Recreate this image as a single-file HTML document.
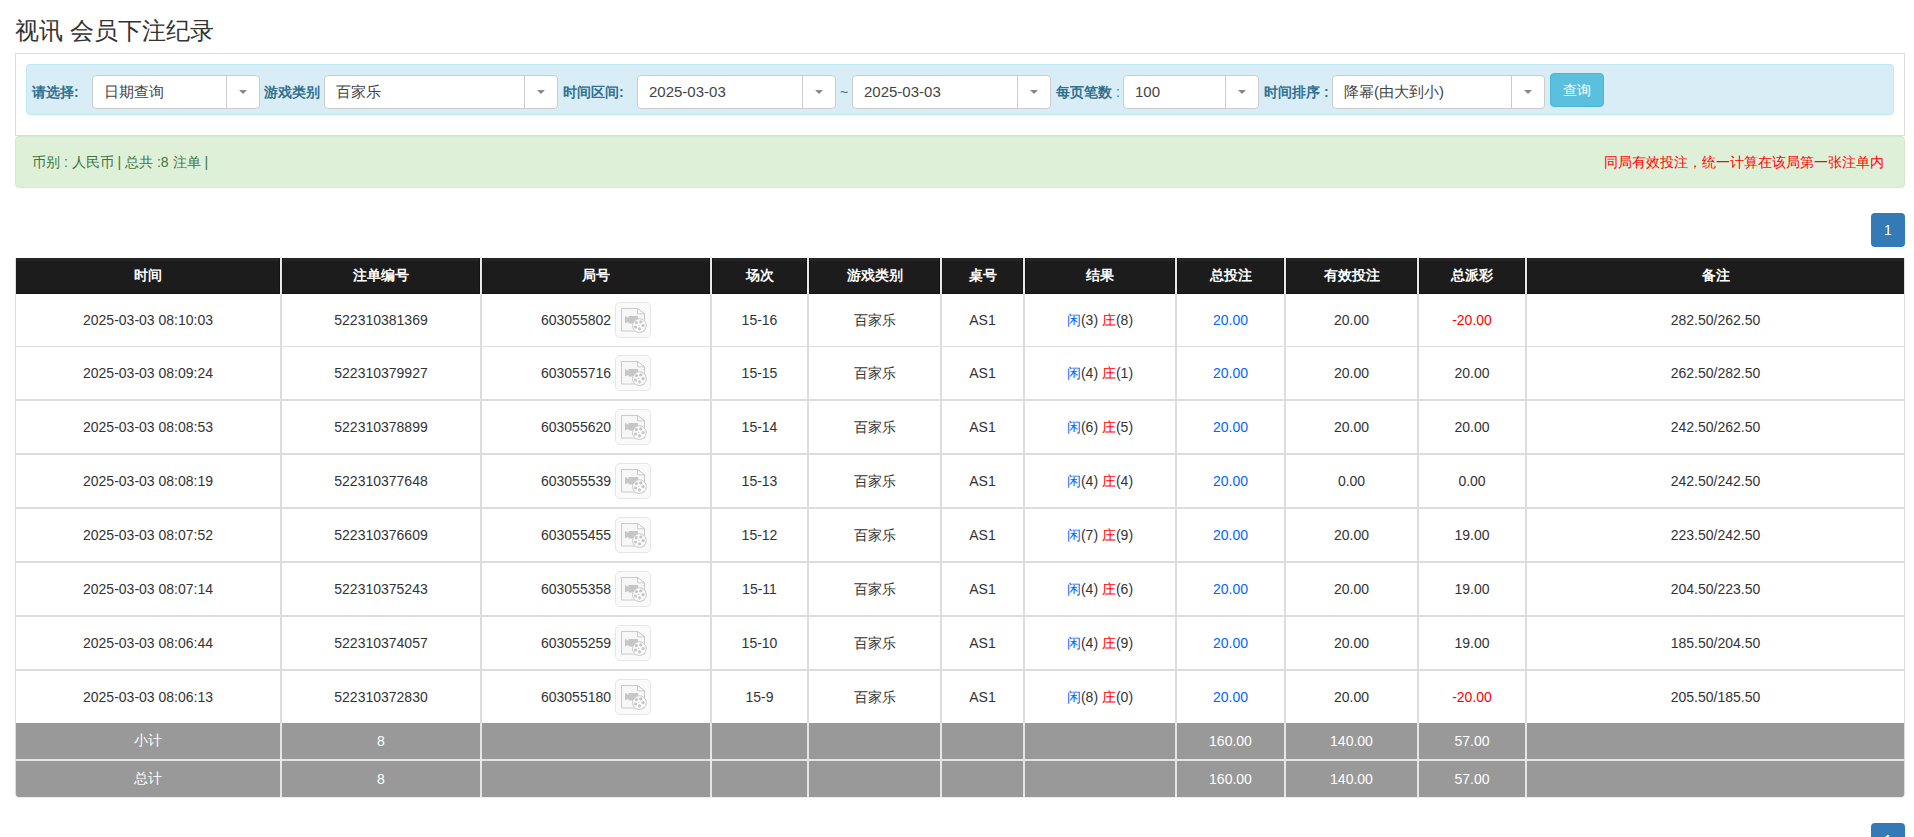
<!DOCTYPE html>
<html><head><meta charset="utf-8"><title>视讯 会员下注纪录</title>
<style>
*{box-sizing:border-box;margin:0;padding:0}
html,body{width:1914px;height:837px;overflow:hidden;background:#fff}
body{font-family:"Liberation Sans",sans-serif;font-size:14px;color:#333;position:relative}
.a{position:absolute}
.c{position:absolute;display:flex;align-items:center;justify-content:center;white-space:nowrap}
.c>span{line-height:20px}
h3{position:absolute;left:15px;top:14px;font-size:24px;font-weight:normal;line-height:34px;color:#333}
.panel{position:absolute;left:15px;top:53px;width:1890px;height:83px;border:1px solid #ddd;background:#fff}
.info{position:absolute;left:26px;top:64px;width:1868px;height:51px;background:#d9edf7;border:1px solid #bce8f1;border-radius:4px}
.lbl{position:absolute;top:75px;height:34px;line-height:34px;font-size:14px;font-weight:bold;color:#31708f;white-space:nowrap}
.sel{position:absolute;top:75px;height:34px;background:#fff;border:1px solid #ccc;border-radius:4px}
.sel .t{position:absolute;left:11px;top:0;line-height:32px;font-size:15px;color:#444;white-space:nowrap}
.sel .s{position:absolute;right:32px;top:0;width:1px;height:32px;background:#ccc}
.sel .ar{position:absolute;right:12px;top:14px;width:0;height:0;border-left:4px solid transparent;border-right:4px solid transparent;border-top:4px solid #888}
.btn{position:absolute;left:1550px;top:73px;width:54px;height:34px;background:#5bc0de;border:1px solid #46b8da;border-radius:4px;color:#fff;font-size:14px;line-height:32px;text-align:center}
.alert{position:absolute;left:15px;top:136px;width:1890px;height:52px;background:#dff0d8;border:1px solid #d6e9c6;border-radius:4px}
.pg{position:absolute;left:1871px;width:34px;height:34px;background:#337ab7;border-radius:4px;color:#fff;font-size:14px;line-height:34px;text-align:center}
.hd{position:absolute;left:16px;top:258px;width:1888px;height:36px;background:linear-gradient(#252525 0,#252525 3px,#1c1c1c 3px,#1c1c1c 35px,#121212 35px)}
.hc{position:absolute;display:flex;align-items:center;justify-content:center;color:#fff;font-weight:bold;font-size:14px;white-space:nowrap}
.vl{position:absolute;width:2px;background:#ddd}
.hl{position:absolute;left:16px;width:1888px;background:#ddd}
.gr{position:absolute;left:16px;width:1888px;height:36px;background:#999}
.gc{position:absolute;display:flex;align-items:center;justify-content:center;color:#fff;font-size:14px;white-space:nowrap}
.ib{display:inline-block;vertical-align:middle;width:36px;height:36px;border:1px solid #e6e6e6;border-radius:5px;background:#fafafa;margin-left:4px;position:relative}
.ib svg{position:absolute;left:-1px;top:-1px}
.bl{color:#0066ff}.rd{color:#ff0000}
</style></head><body>
<h3>视讯 会员下注纪录</h3>
<div class="panel"></div>
<div class="info"></div>

<div class="lbl" style="left:32px">请选择:</div>
<div class="sel" style="left:92px;width:168px"><span class="t">日期查询</span><i class="s"></i><i class="ar"></i></div>
<div class="lbl" style="left:264px">游戏类别</div>
<div class="sel" style="left:324px;width:234px"><span class="t">百家乐</span><i class="s"></i><i class="ar"></i></div>
<div class="lbl" style="left:563px">时间区间:</div>
<div class="sel" style="left:637px;width:199px"><span class="t">2025-03-03</span><i class="s"></i><i class="ar"></i></div>
<div class="lbl" style="left:840px;font-weight:normal">~</div>
<div class="sel" style="left:852px;width:199px"><span class="t">2025-03-03</span><i class="s"></i><i class="ar"></i></div>
<div class="lbl" style="left:1056px">每页笔数 <span style="font-weight:normal">:</span></div>
<div class="sel" style="left:1123px;width:136px"><span class="t">100</span><i class="s"></i><i class="ar"></i></div>
<div class="lbl" style="left:1264px">时间排序 :</div>
<div class="sel" style="left:1332px;width:213px"><span class="t">降幂(由大到小)</span><i class="s"></i><i class="ar"></i></div>
<div class="btn">查询</div>
<div class="alert"></div>
<div class="a" style="left:32px;top:152px;line-height:20px;font-size:14px;color:#3c763d;white-space:nowrap">币别 : 人民币 | 总共 :8 注单 |</div>
<div class="a" style="left:1604px;top:152px;line-height:20px;font-size:14px;color:#ff0000;white-space:nowrap">同局有效投注，统一计算在该局第一张注单内</div>
<div class="pg" style="top:213px">1</div>
<div class="a" style="left:15px;top:258px;width:1890px;height:539px;border:1px solid #ddd;border-top:0;border-radius:0 0 4px 4px;box-shadow:0 1px 1px rgba(0,0,0,.08)"></div>
<div class="hd"></div>
<div class="hc" style="left:16px;top:258px;width:264px;height:36px">时间</div>
<div class="hc" style="left:282px;top:258px;width:198px;height:36px">注单编号</div>
<div class="hc" style="left:482px;top:258px;width:228px;height:36px">局号</div>
<div class="hc" style="left:712px;top:258px;width:95px;height:36px">场次</div>
<div class="hc" style="left:809px;top:258px;width:131px;height:36px">游戏类别</div>
<div class="hc" style="left:942px;top:258px;width:81px;height:36px">桌号</div>
<div class="hc" style="left:1025px;top:258px;width:150px;height:36px">结果</div>
<div class="hc" style="left:1177px;top:258px;width:107px;height:36px">总投注</div>
<div class="hc" style="left:1286px;top:258px;width:131px;height:36px">有效投注</div>
<div class="hc" style="left:1419px;top:258px;width:106px;height:36px">总派彩</div>
<div class="hc" style="left:1527px;top:258px;width:377px;height:36px">备注</div>
<div class="a" style="left:279px;top:258px;width:4px;height:36px;background:linear-gradient(90deg,#141414 0,#141414 1px,#e9e9e9 1px,#e9e9e9 3px,#141414 3px)"></div>
<div class="vl" style="left:280px;top:257px;height:1px;background:#f0f0f0"></div>
<div class="vl" style="left:280px;top:294px;height:503px"></div>
<div class="a" style="left:479px;top:258px;width:4px;height:36px;background:linear-gradient(90deg,#141414 0,#141414 1px,#e9e9e9 1px,#e9e9e9 3px,#141414 3px)"></div>
<div class="vl" style="left:480px;top:257px;height:1px;background:#f0f0f0"></div>
<div class="vl" style="left:480px;top:294px;height:503px"></div>
<div class="a" style="left:709px;top:258px;width:4px;height:36px;background:linear-gradient(90deg,#141414 0,#141414 1px,#e9e9e9 1px,#e9e9e9 3px,#141414 3px)"></div>
<div class="vl" style="left:710px;top:257px;height:1px;background:#f0f0f0"></div>
<div class="vl" style="left:710px;top:294px;height:503px"></div>
<div class="a" style="left:806px;top:258px;width:4px;height:36px;background:linear-gradient(90deg,#141414 0,#141414 1px,#e9e9e9 1px,#e9e9e9 3px,#141414 3px)"></div>
<div class="vl" style="left:807px;top:257px;height:1px;background:#f0f0f0"></div>
<div class="vl" style="left:807px;top:294px;height:503px"></div>
<div class="a" style="left:939px;top:258px;width:4px;height:36px;background:linear-gradient(90deg,#141414 0,#141414 1px,#e9e9e9 1px,#e9e9e9 3px,#141414 3px)"></div>
<div class="vl" style="left:940px;top:257px;height:1px;background:#f0f0f0"></div>
<div class="vl" style="left:940px;top:294px;height:503px"></div>
<div class="a" style="left:1022px;top:258px;width:4px;height:36px;background:linear-gradient(90deg,#141414 0,#141414 1px,#e9e9e9 1px,#e9e9e9 3px,#141414 3px)"></div>
<div class="vl" style="left:1023px;top:257px;height:1px;background:#f0f0f0"></div>
<div class="vl" style="left:1023px;top:294px;height:503px"></div>
<div class="a" style="left:1174px;top:258px;width:4px;height:36px;background:linear-gradient(90deg,#141414 0,#141414 1px,#e9e9e9 1px,#e9e9e9 3px,#141414 3px)"></div>
<div class="vl" style="left:1175px;top:257px;height:1px;background:#f0f0f0"></div>
<div class="vl" style="left:1175px;top:294px;height:503px"></div>
<div class="a" style="left:1283px;top:258px;width:4px;height:36px;background:linear-gradient(90deg,#141414 0,#141414 1px,#e9e9e9 1px,#e9e9e9 3px,#141414 3px)"></div>
<div class="vl" style="left:1284px;top:257px;height:1px;background:#f0f0f0"></div>
<div class="vl" style="left:1284px;top:294px;height:503px"></div>
<div class="a" style="left:1416px;top:258px;width:4px;height:36px;background:linear-gradient(90deg,#141414 0,#141414 1px,#e9e9e9 1px,#e9e9e9 3px,#141414 3px)"></div>
<div class="vl" style="left:1417px;top:257px;height:1px;background:#f0f0f0"></div>
<div class="vl" style="left:1417px;top:294px;height:503px"></div>
<div class="a" style="left:1524px;top:258px;width:4px;height:36px;background:linear-gradient(90deg,#141414 0,#141414 1px,#e9e9e9 1px,#e9e9e9 3px,#141414 3px)"></div>
<div class="vl" style="left:1525px;top:257px;height:1px;background:#f0f0f0"></div>
<div class="vl" style="left:1525px;top:294px;height:503px"></div>
<div class="hl" style="top:346px;height:1px"></div>
<div class="hl" style="top:399px;height:2px"></div>
<div class="hl" style="top:453px;height:2px"></div>
<div class="hl" style="top:507px;height:2px"></div>
<div class="hl" style="top:561px;height:2px"></div>
<div class="hl" style="top:615px;height:2px"></div>
<div class="hl" style="top:669px;height:2px"></div>
<div class="c" style="left:16px;top:294px;width:264px;height:52px"><span>2025-03-03 08:10:03</span></div>
<div class="c" style="left:282px;top:294px;width:198px;height:52px"><span>522310381369</span></div>
<div class="c" style="left:482px;top:294px;width:228px;height:52px"><span><b style="display:flex;align-items:center;font-weight:normal">603055802<span class="ib"><svg width="36" height="36" viewBox="0 0 36 36"><path d="M6.5 6.5H22.5L29.5 11.8V29H6.5Z" fill="#f7f7f7" stroke="#cacaca" stroke-width="1"/><path d="M22.5 6.5V11.8H29.5Z" fill="#fff" stroke="#cacaca" stroke-width="1"/><path d="M13.5 14H23V21.5H13.5Z" fill="#c6c6c6"/><path d="M10 14L14 16V19.5L10 21.5Z" fill="#c6c6c6"/><circle cx="24.4" cy="23.6" r="6.9" fill="#fbfbfb" stroke="#cacaca" stroke-width="1"/><circle cx="21.3" cy="20.6" r="1.6" fill="#c6c6c6"/><circle cx="25.8" cy="19.8" r="1.6" fill="#c6c6c6"/><circle cx="28.1" cy="23.6" r="1.6" fill="#c6c6c6"/><circle cx="24.5" cy="26.8" r="1.6" fill="#c6c6c6"/><circle cx="20.6" cy="25" r="1.6" fill="#c6c6c6"/><circle cx="23.7" cy="23.4" r="0.6" fill="#c6c6c6"/></svg></span></b></span></div>
<div class="c" style="left:712px;top:294px;width:95px;height:52px"><span>15-16</span></div>
<div class="c" style="left:809px;top:294px;width:131px;height:52px"><span>百家乐</span></div>
<div class="c" style="left:942px;top:294px;width:81px;height:52px"><span>AS1</span></div>
<div class="c" style="left:1025px;top:294px;width:150px;height:52px"><span><span class="bl">闲</span>(3) <span class="rd">庄</span>(8)</span></div>
<div class="c" style="left:1177px;top:294px;width:107px;height:52px"><span><span class="bl">20.00</span></span></div>
<div class="c" style="left:1286px;top:294px;width:131px;height:52px"><span>20.00</span></div>
<div class="c" style="left:1419px;top:294px;width:106px;height:52px"><span><span class="rd">-20.00</span></span></div>
<div class="c" style="left:1527px;top:294px;width:377px;height:52px"><span>282.50/262.50</span></div>
<div class="c" style="left:16px;top:347px;width:264px;height:52px"><span>2025-03-03 08:09:24</span></div>
<div class="c" style="left:282px;top:347px;width:198px;height:52px"><span>522310379927</span></div>
<div class="c" style="left:482px;top:347px;width:228px;height:52px"><span><b style="display:flex;align-items:center;font-weight:normal">603055716<span class="ib"><svg width="36" height="36" viewBox="0 0 36 36"><path d="M6.5 6.5H22.5L29.5 11.8V29H6.5Z" fill="#f7f7f7" stroke="#cacaca" stroke-width="1"/><path d="M22.5 6.5V11.8H29.5Z" fill="#fff" stroke="#cacaca" stroke-width="1"/><path d="M13.5 14H23V21.5H13.5Z" fill="#c6c6c6"/><path d="M10 14L14 16V19.5L10 21.5Z" fill="#c6c6c6"/><circle cx="24.4" cy="23.6" r="6.9" fill="#fbfbfb" stroke="#cacaca" stroke-width="1"/><circle cx="21.3" cy="20.6" r="1.6" fill="#c6c6c6"/><circle cx="25.8" cy="19.8" r="1.6" fill="#c6c6c6"/><circle cx="28.1" cy="23.6" r="1.6" fill="#c6c6c6"/><circle cx="24.5" cy="26.8" r="1.6" fill="#c6c6c6"/><circle cx="20.6" cy="25" r="1.6" fill="#c6c6c6"/><circle cx="23.7" cy="23.4" r="0.6" fill="#c6c6c6"/></svg></span></b></span></div>
<div class="c" style="left:712px;top:347px;width:95px;height:52px"><span>15-15</span></div>
<div class="c" style="left:809px;top:347px;width:131px;height:52px"><span>百家乐</span></div>
<div class="c" style="left:942px;top:347px;width:81px;height:52px"><span>AS1</span></div>
<div class="c" style="left:1025px;top:347px;width:150px;height:52px"><span><span class="bl">闲</span>(4) <span class="rd">庄</span>(1)</span></div>
<div class="c" style="left:1177px;top:347px;width:107px;height:52px"><span><span class="bl">20.00</span></span></div>
<div class="c" style="left:1286px;top:347px;width:131px;height:52px"><span>20.00</span></div>
<div class="c" style="left:1419px;top:347px;width:106px;height:52px"><span>20.00</span></div>
<div class="c" style="left:1527px;top:347px;width:377px;height:52px"><span>262.50/282.50</span></div>
<div class="c" style="left:16px;top:401px;width:264px;height:52px"><span>2025-03-03 08:08:53</span></div>
<div class="c" style="left:282px;top:401px;width:198px;height:52px"><span>522310378899</span></div>
<div class="c" style="left:482px;top:401px;width:228px;height:52px"><span><b style="display:flex;align-items:center;font-weight:normal">603055620<span class="ib"><svg width="36" height="36" viewBox="0 0 36 36"><path d="M6.5 6.5H22.5L29.5 11.8V29H6.5Z" fill="#f7f7f7" stroke="#cacaca" stroke-width="1"/><path d="M22.5 6.5V11.8H29.5Z" fill="#fff" stroke="#cacaca" stroke-width="1"/><path d="M13.5 14H23V21.5H13.5Z" fill="#c6c6c6"/><path d="M10 14L14 16V19.5L10 21.5Z" fill="#c6c6c6"/><circle cx="24.4" cy="23.6" r="6.9" fill="#fbfbfb" stroke="#cacaca" stroke-width="1"/><circle cx="21.3" cy="20.6" r="1.6" fill="#c6c6c6"/><circle cx="25.8" cy="19.8" r="1.6" fill="#c6c6c6"/><circle cx="28.1" cy="23.6" r="1.6" fill="#c6c6c6"/><circle cx="24.5" cy="26.8" r="1.6" fill="#c6c6c6"/><circle cx="20.6" cy="25" r="1.6" fill="#c6c6c6"/><circle cx="23.7" cy="23.4" r="0.6" fill="#c6c6c6"/></svg></span></b></span></div>
<div class="c" style="left:712px;top:401px;width:95px;height:52px"><span>15-14</span></div>
<div class="c" style="left:809px;top:401px;width:131px;height:52px"><span>百家乐</span></div>
<div class="c" style="left:942px;top:401px;width:81px;height:52px"><span>AS1</span></div>
<div class="c" style="left:1025px;top:401px;width:150px;height:52px"><span><span class="bl">闲</span>(6) <span class="rd">庄</span>(5)</span></div>
<div class="c" style="left:1177px;top:401px;width:107px;height:52px"><span><span class="bl">20.00</span></span></div>
<div class="c" style="left:1286px;top:401px;width:131px;height:52px"><span>20.00</span></div>
<div class="c" style="left:1419px;top:401px;width:106px;height:52px"><span>20.00</span></div>
<div class="c" style="left:1527px;top:401px;width:377px;height:52px"><span>242.50/262.50</span></div>
<div class="c" style="left:16px;top:455px;width:264px;height:52px"><span>2025-03-03 08:08:19</span></div>
<div class="c" style="left:282px;top:455px;width:198px;height:52px"><span>522310377648</span></div>
<div class="c" style="left:482px;top:455px;width:228px;height:52px"><span><b style="display:flex;align-items:center;font-weight:normal">603055539<span class="ib"><svg width="36" height="36" viewBox="0 0 36 36"><path d="M6.5 6.5H22.5L29.5 11.8V29H6.5Z" fill="#f7f7f7" stroke="#cacaca" stroke-width="1"/><path d="M22.5 6.5V11.8H29.5Z" fill="#fff" stroke="#cacaca" stroke-width="1"/><path d="M13.5 14H23V21.5H13.5Z" fill="#c6c6c6"/><path d="M10 14L14 16V19.5L10 21.5Z" fill="#c6c6c6"/><circle cx="24.4" cy="23.6" r="6.9" fill="#fbfbfb" stroke="#cacaca" stroke-width="1"/><circle cx="21.3" cy="20.6" r="1.6" fill="#c6c6c6"/><circle cx="25.8" cy="19.8" r="1.6" fill="#c6c6c6"/><circle cx="28.1" cy="23.6" r="1.6" fill="#c6c6c6"/><circle cx="24.5" cy="26.8" r="1.6" fill="#c6c6c6"/><circle cx="20.6" cy="25" r="1.6" fill="#c6c6c6"/><circle cx="23.7" cy="23.4" r="0.6" fill="#c6c6c6"/></svg></span></b></span></div>
<div class="c" style="left:712px;top:455px;width:95px;height:52px"><span>15-13</span></div>
<div class="c" style="left:809px;top:455px;width:131px;height:52px"><span>百家乐</span></div>
<div class="c" style="left:942px;top:455px;width:81px;height:52px"><span>AS1</span></div>
<div class="c" style="left:1025px;top:455px;width:150px;height:52px"><span><span class="bl">闲</span>(4) <span class="rd">庄</span>(4)</span></div>
<div class="c" style="left:1177px;top:455px;width:107px;height:52px"><span><span class="bl">20.00</span></span></div>
<div class="c" style="left:1286px;top:455px;width:131px;height:52px"><span>0.00</span></div>
<div class="c" style="left:1419px;top:455px;width:106px;height:52px"><span>0.00</span></div>
<div class="c" style="left:1527px;top:455px;width:377px;height:52px"><span>242.50/242.50</span></div>
<div class="c" style="left:16px;top:509px;width:264px;height:52px"><span>2025-03-03 08:07:52</span></div>
<div class="c" style="left:282px;top:509px;width:198px;height:52px"><span>522310376609</span></div>
<div class="c" style="left:482px;top:509px;width:228px;height:52px"><span><b style="display:flex;align-items:center;font-weight:normal">603055455<span class="ib"><svg width="36" height="36" viewBox="0 0 36 36"><path d="M6.5 6.5H22.5L29.5 11.8V29H6.5Z" fill="#f7f7f7" stroke="#cacaca" stroke-width="1"/><path d="M22.5 6.5V11.8H29.5Z" fill="#fff" stroke="#cacaca" stroke-width="1"/><path d="M13.5 14H23V21.5H13.5Z" fill="#c6c6c6"/><path d="M10 14L14 16V19.5L10 21.5Z" fill="#c6c6c6"/><circle cx="24.4" cy="23.6" r="6.9" fill="#fbfbfb" stroke="#cacaca" stroke-width="1"/><circle cx="21.3" cy="20.6" r="1.6" fill="#c6c6c6"/><circle cx="25.8" cy="19.8" r="1.6" fill="#c6c6c6"/><circle cx="28.1" cy="23.6" r="1.6" fill="#c6c6c6"/><circle cx="24.5" cy="26.8" r="1.6" fill="#c6c6c6"/><circle cx="20.6" cy="25" r="1.6" fill="#c6c6c6"/><circle cx="23.7" cy="23.4" r="0.6" fill="#c6c6c6"/></svg></span></b></span></div>
<div class="c" style="left:712px;top:509px;width:95px;height:52px"><span>15-12</span></div>
<div class="c" style="left:809px;top:509px;width:131px;height:52px"><span>百家乐</span></div>
<div class="c" style="left:942px;top:509px;width:81px;height:52px"><span>AS1</span></div>
<div class="c" style="left:1025px;top:509px;width:150px;height:52px"><span><span class="bl">闲</span>(7) <span class="rd">庄</span>(9)</span></div>
<div class="c" style="left:1177px;top:509px;width:107px;height:52px"><span><span class="bl">20.00</span></span></div>
<div class="c" style="left:1286px;top:509px;width:131px;height:52px"><span>20.00</span></div>
<div class="c" style="left:1419px;top:509px;width:106px;height:52px"><span>19.00</span></div>
<div class="c" style="left:1527px;top:509px;width:377px;height:52px"><span>223.50/242.50</span></div>
<div class="c" style="left:16px;top:563px;width:264px;height:52px"><span>2025-03-03 08:07:14</span></div>
<div class="c" style="left:282px;top:563px;width:198px;height:52px"><span>522310375243</span></div>
<div class="c" style="left:482px;top:563px;width:228px;height:52px"><span><b style="display:flex;align-items:center;font-weight:normal">603055358<span class="ib"><svg width="36" height="36" viewBox="0 0 36 36"><path d="M6.5 6.5H22.5L29.5 11.8V29H6.5Z" fill="#f7f7f7" stroke="#cacaca" stroke-width="1"/><path d="M22.5 6.5V11.8H29.5Z" fill="#fff" stroke="#cacaca" stroke-width="1"/><path d="M13.5 14H23V21.5H13.5Z" fill="#c6c6c6"/><path d="M10 14L14 16V19.5L10 21.5Z" fill="#c6c6c6"/><circle cx="24.4" cy="23.6" r="6.9" fill="#fbfbfb" stroke="#cacaca" stroke-width="1"/><circle cx="21.3" cy="20.6" r="1.6" fill="#c6c6c6"/><circle cx="25.8" cy="19.8" r="1.6" fill="#c6c6c6"/><circle cx="28.1" cy="23.6" r="1.6" fill="#c6c6c6"/><circle cx="24.5" cy="26.8" r="1.6" fill="#c6c6c6"/><circle cx="20.6" cy="25" r="1.6" fill="#c6c6c6"/><circle cx="23.7" cy="23.4" r="0.6" fill="#c6c6c6"/></svg></span></b></span></div>
<div class="c" style="left:712px;top:563px;width:95px;height:52px"><span>15-11</span></div>
<div class="c" style="left:809px;top:563px;width:131px;height:52px"><span>百家乐</span></div>
<div class="c" style="left:942px;top:563px;width:81px;height:52px"><span>AS1</span></div>
<div class="c" style="left:1025px;top:563px;width:150px;height:52px"><span><span class="bl">闲</span>(4) <span class="rd">庄</span>(6)</span></div>
<div class="c" style="left:1177px;top:563px;width:107px;height:52px"><span><span class="bl">20.00</span></span></div>
<div class="c" style="left:1286px;top:563px;width:131px;height:52px"><span>20.00</span></div>
<div class="c" style="left:1419px;top:563px;width:106px;height:52px"><span>19.00</span></div>
<div class="c" style="left:1527px;top:563px;width:377px;height:52px"><span>204.50/223.50</span></div>
<div class="c" style="left:16px;top:617px;width:264px;height:52px"><span>2025-03-03 08:06:44</span></div>
<div class="c" style="left:282px;top:617px;width:198px;height:52px"><span>522310374057</span></div>
<div class="c" style="left:482px;top:617px;width:228px;height:52px"><span><b style="display:flex;align-items:center;font-weight:normal">603055259<span class="ib"><svg width="36" height="36" viewBox="0 0 36 36"><path d="M6.5 6.5H22.5L29.5 11.8V29H6.5Z" fill="#f7f7f7" stroke="#cacaca" stroke-width="1"/><path d="M22.5 6.5V11.8H29.5Z" fill="#fff" stroke="#cacaca" stroke-width="1"/><path d="M13.5 14H23V21.5H13.5Z" fill="#c6c6c6"/><path d="M10 14L14 16V19.5L10 21.5Z" fill="#c6c6c6"/><circle cx="24.4" cy="23.6" r="6.9" fill="#fbfbfb" stroke="#cacaca" stroke-width="1"/><circle cx="21.3" cy="20.6" r="1.6" fill="#c6c6c6"/><circle cx="25.8" cy="19.8" r="1.6" fill="#c6c6c6"/><circle cx="28.1" cy="23.6" r="1.6" fill="#c6c6c6"/><circle cx="24.5" cy="26.8" r="1.6" fill="#c6c6c6"/><circle cx="20.6" cy="25" r="1.6" fill="#c6c6c6"/><circle cx="23.7" cy="23.4" r="0.6" fill="#c6c6c6"/></svg></span></b></span></div>
<div class="c" style="left:712px;top:617px;width:95px;height:52px"><span>15-10</span></div>
<div class="c" style="left:809px;top:617px;width:131px;height:52px"><span>百家乐</span></div>
<div class="c" style="left:942px;top:617px;width:81px;height:52px"><span>AS1</span></div>
<div class="c" style="left:1025px;top:617px;width:150px;height:52px"><span><span class="bl">闲</span>(4) <span class="rd">庄</span>(9)</span></div>
<div class="c" style="left:1177px;top:617px;width:107px;height:52px"><span><span class="bl">20.00</span></span></div>
<div class="c" style="left:1286px;top:617px;width:131px;height:52px"><span>20.00</span></div>
<div class="c" style="left:1419px;top:617px;width:106px;height:52px"><span>19.00</span></div>
<div class="c" style="left:1527px;top:617px;width:377px;height:52px"><span>185.50/204.50</span></div>
<div class="c" style="left:16px;top:671px;width:264px;height:52px"><span>2025-03-03 08:06:13</span></div>
<div class="c" style="left:282px;top:671px;width:198px;height:52px"><span>522310372830</span></div>
<div class="c" style="left:482px;top:671px;width:228px;height:52px"><span><b style="display:flex;align-items:center;font-weight:normal">603055180<span class="ib"><svg width="36" height="36" viewBox="0 0 36 36"><path d="M6.5 6.5H22.5L29.5 11.8V29H6.5Z" fill="#f7f7f7" stroke="#cacaca" stroke-width="1"/><path d="M22.5 6.5V11.8H29.5Z" fill="#fff" stroke="#cacaca" stroke-width="1"/><path d="M13.5 14H23V21.5H13.5Z" fill="#c6c6c6"/><path d="M10 14L14 16V19.5L10 21.5Z" fill="#c6c6c6"/><circle cx="24.4" cy="23.6" r="6.9" fill="#fbfbfb" stroke="#cacaca" stroke-width="1"/><circle cx="21.3" cy="20.6" r="1.6" fill="#c6c6c6"/><circle cx="25.8" cy="19.8" r="1.6" fill="#c6c6c6"/><circle cx="28.1" cy="23.6" r="1.6" fill="#c6c6c6"/><circle cx="24.5" cy="26.8" r="1.6" fill="#c6c6c6"/><circle cx="20.6" cy="25" r="1.6" fill="#c6c6c6"/><circle cx="23.7" cy="23.4" r="0.6" fill="#c6c6c6"/></svg></span></b></span></div>
<div class="c" style="left:712px;top:671px;width:95px;height:52px"><span>15-9</span></div>
<div class="c" style="left:809px;top:671px;width:131px;height:52px"><span>百家乐</span></div>
<div class="c" style="left:942px;top:671px;width:81px;height:52px"><span>AS1</span></div>
<div class="c" style="left:1025px;top:671px;width:150px;height:52px"><span><span class="bl">闲</span>(8) <span class="rd">庄</span>(0)</span></div>
<div class="c" style="left:1177px;top:671px;width:107px;height:52px"><span><span class="bl">20.00</span></span></div>
<div class="c" style="left:1286px;top:671px;width:131px;height:52px"><span>20.00</span></div>
<div class="c" style="left:1419px;top:671px;width:106px;height:52px"><span><span class="rd">-20.00</span></span></div>
<div class="c" style="left:1527px;top:671px;width:377px;height:52px"><span>205.50/185.50</span></div>
<div class="gr" style="top:723px;"></div>
<div class="gc" style="left:16px;top:723px;width:264px;height:36px">小计</div>
<div class="gc" style="left:282px;top:723px;width:198px;height:36px">8</div>
<div class="gc" style="left:1177px;top:723px;width:107px;height:36px">160.00</div>
<div class="gc" style="left:1286px;top:723px;width:131px;height:36px">140.00</div>
<div class="gc" style="left:1419px;top:723px;width:106px;height:36px">57.00</div>
<div class="gr" style="top:761px;border-radius:0 0 3px 3px"></div>
<div class="gc" style="left:16px;top:761px;width:264px;height:36px">总计</div>
<div class="gc" style="left:282px;top:761px;width:198px;height:36px">8</div>
<div class="gc" style="left:1177px;top:761px;width:107px;height:36px">160.00</div>
<div class="gc" style="left:1286px;top:761px;width:131px;height:36px">140.00</div>
<div class="gc" style="left:1419px;top:761px;width:106px;height:36px">57.00</div>
<div class="hl" style="top:759px;height:2px;background:#e5e5e5"></div>
<div class="vl" style="left:280px;top:723px;height:74px;background:#e5e5e5"></div>
<div class="vl" style="left:480px;top:723px;height:74px;background:#e5e5e5"></div>
<div class="vl" style="left:710px;top:723px;height:74px;background:#e5e5e5"></div>
<div class="vl" style="left:807px;top:723px;height:74px;background:#e5e5e5"></div>
<div class="vl" style="left:940px;top:723px;height:74px;background:#e5e5e5"></div>
<div class="vl" style="left:1023px;top:723px;height:74px;background:#e5e5e5"></div>
<div class="vl" style="left:1175px;top:723px;height:74px;background:#e5e5e5"></div>
<div class="vl" style="left:1284px;top:723px;height:74px;background:#e5e5e5"></div>
<div class="vl" style="left:1417px;top:723px;height:74px;background:#e5e5e5"></div>
<div class="vl" style="left:1525px;top:723px;height:74px;background:#e5e5e5"></div>
<div class="pg" style="top:823px">1</div>
</body></html>
